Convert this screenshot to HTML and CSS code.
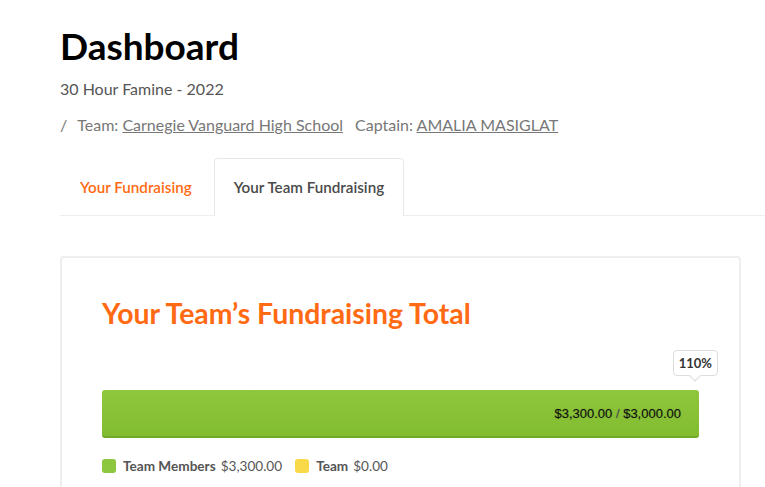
FILE: index.html
```html
<!DOCTYPE html>
<html>
<head>
<title>Dashboard</title>
<link rel="stylesheet" href="styles.css">
</head>
<body>
<div id="main">
<h1 class="title">Dashboard</h1>
<p class="event">30 Hour Famine - 2022</p>
<p class="crumb">
<span class="sep">/</span>
<span>Team: <a href="#">Carnegie Vanguard High School</a></span>
<span>Captain: <a href="#">AMALIA MASIGLAT</a></span>
</p>
<ul class="tabs">
<li><a href="#">Your Fundraising</a></li>
<li class="active"><a href="#">Your Team Fundraising</a></li>
</ul>
<div class="card">
<h2>Your Team’s Fundraising Total</h2>
<div class="progress">
<div class="pct"><span>110%</span></div>
<div class="bar"><span class="amt">$3,300.00 <i>/</i> $3,000.00</span></div>
</div>
<div class="legend">
<span class="key"><b class="dot green"></b><strong>Team Members</strong> $3,300.00</span>
<span class="key"><b class="dot yellow"></b><strong>Team</strong> $0.00</span>
</div>
</div>
</div>
</body>
</html>
```

FILE: styles.css
```css
*{
margin: 0;
padding: 0;
box-sizing: border-box;
}
body{
font-family: Lato, "Open Sans", sans-serif;
background: #fff;
color: #555;
}
#main{
padding: 24px 0 0 60px;
}
.title{
font-size: 37px;
font-weight: bold;
color: #000;
line-height: 43px;
}
.event{
font-size: 16px;
line-height: 24px;
margin-top: 10px;
color: #555;
}
.crumb{
font-size: 16px;
line-height: 24px;
margin-top: 12px;
color: #777;
display: flex;
gap: 10px;
}
.crumb span + span + span{
margin-left: 2px;
}
.crumb a{
color: #777;
}
.tabs{
display: flex;
list-style: none;
margin-top: 21px;
border-bottom: 1px solid #eee;
gap: 2px;
}
.tabs li{
border: 1px solid transparent;
border-bottom: none;
border-radius: 4px 4px 0 0;
margin-bottom: -1px;
}
.tabs li a{
display: block;
padding: 0 19px;
line-height: 56px;
font-size: 15.2px;
font-weight: 600;
color: #ff6a13;
text-decoration: none;
}
.tabs li.active{
border-color: #e8e8e8;
background: #fff;
padding-bottom: 1px;
}
.tabs li.active a{
color: #4a4a4a;
}
.card{
margin-top: 40px;
width: 681px;
border: 2px solid #eee;
border-bottom: none;
border-radius: 4px 4px 0 0;
padding: 35px 40px 30px 40px;
}
.card h2{
font-size: 28.4px;
font-weight: bold;
color: #ff6a13;
line-height: 40px;
}
.progress{
margin-top: 17px;
}
.pct{
display: flex;
justify-content: flex-end;
}
.pct span{
position: relative;
margin-right: -19px;
font-size: 13px;
font-weight: bold;
color: #333;
line-height: 24px;
padding: 0 5px;
border: 1px solid #ddd;
border-radius: 4px;
background: #fff;
}
.pct span::after{
content: '';
position: absolute;
left: 50%;
bottom: -5px;
width: 7px;
height: 7px;
margin-left: -4px;
background: #fff;
border-right: 1px solid #ddd;
border-bottom: 1px solid #ddd;
transform: rotate(45deg);
}
.bar{
margin-top: 14px;
height: 48px;
border-radius: 3px;
background: linear-gradient(#8fc73c, #82bc30);
border-bottom: 2px solid #73a82a;
display: flex;
align-items: center;
justify-content: flex-end;
padding-right: 18px;
}
.amt{
font-family: "Liberation Sans", Arial, sans-serif;
font-size: 13px;
color: #111;
text-shadow: 0 0 1px rgba(0,0,0,0.35);
}
.amt i{
font-style: normal;
color: #555;
}
.legend{
margin-top: 20px;
display: flex;
gap: 13px;
font-size: 13.6px;
color: #555;
}
.key{
display: flex;
align-items: center;
gap: 4px;
}
.key strong{
margin-right: 1px;
}
.dot{
width: 14px;
height: 14px;
border-radius: 3px;
margin-right: 3px;
}
.green{
background: #8dc63f;
}
.yellow{
background: #f9d94a;
}
```
